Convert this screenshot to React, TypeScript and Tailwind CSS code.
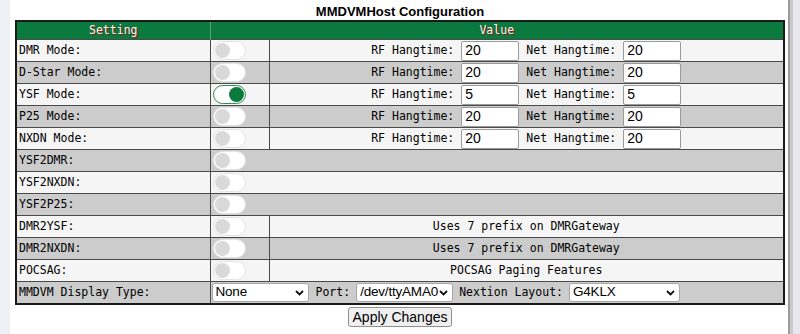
import React from "react";

type Row = {
  label: string
  on?: boolean
  kind: "hang" | "wide" | "note" | "display"
  rf?: string
  net?: string
  note?: string
}

const rows: Row[] = [
  { label: "DMR Mode:", kind: "hang", rf: "20", net: "20" },
  { label: "D-Star Mode:", kind: "hang", rf: "20", net: "20" },
  { label: "YSF Mode:", kind: "hang", rf: "5", net: "5", on: true },
  { label: "P25 Mode:", kind: "hang", rf: "20", net: "20" },
  { label: "NXDN Mode:", kind: "hang", rf: "20", net: "20" },
  { label: "YSF2DMR:", kind: "wide" },
  { label: "YSF2NXDN:", kind: "wide" },
  { label: "YSF2P25:", kind: "wide" },
  { label: "DMR2YSF:", kind: "note", note: "Uses 7 prefix on DMRGateway" },
  { label: "DMR2NXDN:", kind: "note", note: "Uses 7 prefix on DMRGateway" },
  { label: "POCSAG:", kind: "note", note: "POCSAG Paging Features" },
  { label: "MMDVM Display Type:", kind: "display" },
]

const mono = "font-['DejaVu_Sans_Mono',monospace] text-[11.5px]"
const sans = "font-['Liberation_Sans',Arial,sans-serif]"

function Toggle({ on }: { on?: boolean }) {
  if (on) {
    return (
      <span className="flex items-center justify-end w-[33px] h-[19px] rounded-full border-[1.5px] border-[#2f9158] bg-white px-[1px]">
        <span className="w-[15px] h-[15px] rounded-full bg-[#0b7a3d]" />
      </span>
    )
  }
  return (
    <span className="flex items-center w-[33px] h-[19px] rounded-full border border-[#e4e4e4] bg-white px-[1px]">
      <span className="w-[15px] h-[15px] rounded-full bg-[#d9d9d9]" />
    </span>
  )
}

function Field({ value }: { value: string }) {
  return (
    <input
      readOnly
      value={value}
      className={`w-[58px] h-[20px] px-[3px] bg-white border border-[#9a9a9a] rounded-[2px] text-[14px] text-black ${sans}`}
    />
  )
}

function Select({ value, width }: { value: string; width: string }) {
  return (
    <span className={`relative flex items-center h-[19px] bg-white border border-[#a8a8a8] rounded-[3px] ${width}`}>
      <span className={`pl-[3px] text-[13.5px] tracking-[-0.2px] text-black ${sans}`}>{value}</span>
      <svg className="absolute right-[4px] top-[6px]" width="9" height="6" viewBox="0 0 9 6">
        <path d="M1 1 L4.5 4.5 L8 1" fill="none" stroke="#111" strokeWidth="1.8" />
      </svg>
    </span>
  )
}

export default function App() {
  return (
    <div className="flex w-[800px] h-[334px] bg-white overflow-hidden">
      <div className="w-[10px] shrink-0 bg-[#eef0f5]" />
      <div className="w-[778px] shrink-0 pl-[5px] pr-[3px]">
        <div className={`text-center font-bold text-[13px] leading-[16px] pt-[4px] text-black ${sans}`}>
          MMDVMHost Configuration
        </div>
        <table className={`w-full table-fixed border-collapse border-2 border-[#1a1a1a] whitespace-nowrap ${mono} text-black`}>
          <colgroup>
            <col className="w-[194px]" />
            <col className="w-[59px]" />
            <col />
          </colgroup>
          <thead>
            <tr className="h-[17px] bg-[#0b7a3e]">
              <th className="p-0 font-normal text-[#fff4f0] [text-shadow:1px_1px_1px_#9b1010] border-r border-[#5d9f78]">Setting</th>
              <th colSpan={2} className="p-0 font-normal text-[#fff4f0] [text-shadow:1px_1px_1px_#9b1010]">Value</th>
            </tr>
          </thead>
          <tbody>
            {rows.map((r, i) => {
              const bg = i % 2 === 0 ? "bg-[#f5f5f5]" : "bg-[#cccccc]"
              return (
                <tr key={i} className={`h-[22px] ${bg}`}>
                  <td className="p-0 pl-[2px] border border-[#4a4a4a]">{r.label}</td>
                  {r.kind === "display" ? (
                    <td colSpan={2} className="p-0 pl-[1px] border border-[#4a4a4a]">
                      <div className="flex items-center">
                        <Select value="None" width="w-[97px]" />
                        <span className="ml-[7px]">Port:</span>
                        <span className="ml-[6px]"><Select value="/dev/ttyAMA0" width="w-[97px]" /></span>
                        <span className="ml-[6px]">Nextion Layout:</span>
                        <span className="ml-[6px]"><Select value="G4KLX" width="w-[111px]" /></span>
                      </div>
                    </td>
                  ) : r.kind === "wide" ? (
                    <td colSpan={2} className="p-0 pl-[2px] border border-[#4a4a4a]">
                      <Toggle on={r.on} />
                    </td>
                  ) : (
                    <>
                      <td className="p-0 pl-[2px] border border-[#4a4a4a]">
                        <Toggle on={r.on} />
                      </td>
                      <td className="p-0 border border-[#4a4a4a]">
                        {r.kind === "hang" ? (
                          <div className="flex items-center justify-center gap-[7px]">
                            <span>RF Hangtime:</span>
                            <Field value={r.rf ?? ""} />
                            <span>Net Hangtime:</span>
                            <Field value={r.net ?? ""} />
                          </div>
                        ) : (
                          <div className="text-center">{r.note}</div>
                        )}
                      </td>
                    </>
                  )}
                </tr>
              )
            })}
          </tbody>
        </table>
        <div className="flex justify-center pt-[2px]">
          <button className={`h-[20px] px-[4px] bg-[#efefef] border border-[#8f8f8f] rounded-[3px] text-[14px] leading-[16px] text-black ${sans}`}>
            Apply Changes
          </button>
        </div>
      </div>
      <div className="w-[2px] shrink-0 bg-[#9c9c9c]" />
      <div className="w-[3px] shrink-0 bg-[#c9c9ce]" />
      <div className="flex-1 bg-[#e6e6ec]" />
    </div>
  )
}
